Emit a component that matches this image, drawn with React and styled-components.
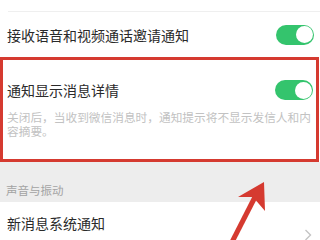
import React from 'react'
import styled, { createGlobalStyle } from 'styled-components'

const Global = createGlobalStyle`
  html, body {
    margin: 0;
    padding: 0;
    background: #fff;
  }
  body {
    font-family: "Noto Sans CJK SC", "Noto Sans", sans-serif;
  }
`

const Page = styled.div`
  position: relative;
  width: 320px;
  height: 240px;
  overflow: hidden;
  background: #fff;
`

const TopGap = styled.div`
  height: 11px;
  margin-left: 8px;
  border-bottom: 1px solid #efefef;
`

const Row = styled.div`
  display: flex;
  align-items: center;
  justify-content: space-between;
  height: ${p => p.h || 45}px;
  padding: 0 6px 0 7px;
  background: #fff;
`

const Label = styled.span`
  font-size: 14px;
  line-height: 20px;
  color: #2a2a2a;
`

const Toggle = styled.div`
  position: relative;
  width: 38px;
  height: 20px;
  border-radius: 10px;
  background: ${p => (p.on ? '#34c46d' : '#ddd')};
  &::after {
    content: '';
    position: absolute;
    top: 1.5px;
    right: ${p => (p.on ? '1.5px' : 'auto')};
    left: ${p => (p.on ? 'auto' : '1.5px')};
    width: 17px;
    height: 17px;
    border-radius: 50%;
    background: #fff;
  }
`

const Highlight = styled.div`
  margin-right: 1px;
  border: 3px solid #d53a30;
  padding: 20px 3px 21px 4px;
  background: #fff;
`

const TitleRow = styled.div`
  display: flex;
  align-items: center;
  justify-content: space-between;
  height: 20px;
`

const Desc = styled.p`
  margin: 10px 0 0;
  padding-right: 2px;
  font-size: 11.7px;
  line-height: 14px;
  color: #c2c2c2;
`

const Section = styled.div`
  height: 40px;
  box-sizing: border-box;
  padding: 21px 6px 0;
  background: #ededed;
  font-size: 11.5px;
  line-height: 14px;
  color: #a3a3a3;
`

const NavRow = styled.div`
  display: flex;
  justify-content: space-between;
  padding: 11px 8px 0 7px;
  height: 60px;
  background: #fff;
`

const Chevron = styled.svg`
  margin-top: 16px;
  width: 8px;
  height: 12px;
`

const Arrow = styled.svg`
  position: absolute;
  left: 0;
  top: 0;
  pointer-events: none;
`

export default function App() {
  return (
    <Page>
      <Global />
      <TopGap />
      <Row>
        <Label>接收语音和视频通话邀请通知</Label>
        <Toggle on />
      </Row>
      <Highlight>
        <TitleRow>
          <Label>通知显示消息详情</Label>
          <Toggle on />
        </TitleRow>
        <Desc>关闭后，当收到微信消息时，通知提示将不显示发信人和内容摘要。</Desc>
      </Highlight>
      <Section>声音与振动</Section>
      <NavRow>
        <Label>新消息系统通知</Label>
        <Chevron viewBox="0 0 8 12">
          <path d="M1.5 1 L6.5 6 L1.5 11" fill="none" stroke="#c4c4c4" strokeWidth="1.4" />
        </Chevron>
      </NavRow>
      <Arrow width="320" height="240" viewBox="0 0 320 240">
        <line x1="231" y1="244" x2="255" y2="197" stroke="#d53a30" strokeWidth="5" />
        <polygon points="264,182 238,197 253,197 265,211" fill="#d53a30" />
      </Arrow>
    </Page>
  )
}
